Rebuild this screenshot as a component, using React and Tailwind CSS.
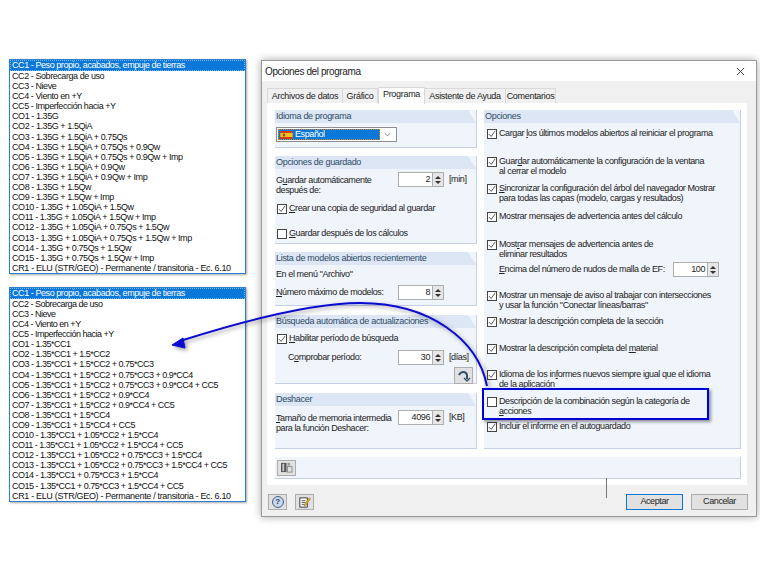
const list1 = [
  "CC2 - Sobrecarga de uso",
  "CC3 - Nieve",
  "CC4 - Viento en +Y",
  "CC5 - Imperfección hacia +Y",
  "CO1 - 1.35G",
  "CO2 - 1.35G + 1.5QiA",
  "CO3 - 1.35G + 1.5QiA + 0.75Qs",
  "CO4 - 1.35G + 1.5QiA + 0.75Qs + 0.9Qw",
  "CO5 - 1.35G + 1.5QiA + 0.75Qs + 0.9Qw + Imp",
  "CO6 - 1.35G + 1.5QiA + 0.9Qw",
  "CO7 - 1.35G + 1.5QiA + 0.9Qw + Imp",
  "CO8 - 1.35G + 1.5Qw",
  "CO9 - 1.35G + 1.5Qw + Imp",
  "CO10 - 1.35G + 1.05QiA + 1.5Qw",
  "CO11 - 1.35G + 1.05QiA + 1.5Qw + Imp",
  "CO12 - 1.35G + 1.05QiA + 0.75Qs + 1.5Qw",
  "CO13 - 1.35G + 1.05QiA + 0.75Qs + 1.5Qw + Imp",
  "CO14 - 1.35G + 0.75Qs + 1.5Qw",
  "CO15 - 1.35G + 0.75Qs + 1.5Qw + Imp",
];

const list2 = [
  "CC2 - Sobrecarga de uso",
  "CC3 - Nieve",
  "CC4 - Viento en +Y",
  "CC5 - Imperfección hacia +Y",
  "CO1 - 1.35*CC1",
  "CO2 - 1.35*CC1 + 1.5*CC2",
  "CO3 - 1.35*CC1 + 1.5*CC2 + 0.75*CC3",
  "CO4 - 1.35*CC1 + 1.5*CC2 + 0.75*CC3 + 0.9*CC4",
  "CO5 - 1.35*CC1 + 1.5*CC2 + 0.75*CC3 + 0.9*CC4 + CC5",
  "CO6 - 1.35*CC1 + 1.5*CC2 + 0.9*CC4",
  "CO7 - 1.35*CC1 + 1.5*CC2 + 0.9*CC4 + CC5",
  "CO8 - 1.35*CC1 + 1.5*CC4",
  "CO9 - 1.35*CC1 + 1.5*CC4 + CC5",
  "CO10 - 1.35*CC1 + 1.05*CC2 + 1.5*CC4",
  "CO11 - 1.35*CC1 + 1.05*CC2 + 1.5*CC4 + CC5",
  "CO12 - 1.35*CC1 + 1.05*CC2 + 0.75*CC3 + 1.5*CC4",
  "CO13 - 1.35*CC1 + 1.05*CC2 + 0.75*CC3 + 1.5*CC4 + CC5",
  "CO14 - 1.35*CC1 + 0.75*CC3 + 1.5*CC4",
  "CO15 - 1.35*CC1 + 0.75*CC3 + 1.5*CC4 + CC5",
];

function ComboList({ items, spacing }) {
  return (
    <div className="w-[237px] border border-[#2f7fd0] bg-white shadow-[1px_1px_2px_rgba(0,0,0,0.35)] text-[9px] leading-[10.1px] text-[#111]">
      <div className="h-[11px] bg-[#0a78d8] pl-[2px] tracking-[-0.43px] text-white whitespace-nowrap outline-1 -outline-offset-1 outline-dotted outline-[#7fb4e6]">CC1 - Peso propio, acabados, empuje de tierras</div>
      {items.map((t) => (
        <div key={t} className={`h-[10.1px] pl-[2px] whitespace-nowrap ${spacing}`}>{t}</div>
      ))}
      <div className="h-[10.1px] pl-[2px] whitespace-nowrap tracking-[-0.33px]">CR1 - ELU (STR/GEO) - Permanente / transitoria - Ec. 6.10</div>
    </div>
  );
}

function Check({ checked }) {
  return (
    <span className="mt-[1px] flex h-[10px] w-[10px] shrink-0 items-center justify-center border border-[#444] bg-white">
      {checked && (
        <svg viewBox="0 0 10 10" className="h-[8px] w-[8px]" fill="none" stroke="#333" strokeWidth="1">
          <path d="M1 5l3 3 5-7" />
        </svg>
      )}
    </span>
  );
}

function Opt({ checked = true, h = "", children }) {
  return (
    <div className={`flex gap-[2px] whitespace-nowrap leading-[10px] ${h}`}>
      <Check checked={checked} />
      <div>{children}</div>
    </div>
  );
}

function Spin({ value }) {
  return (
    <div className="flex h-[15px] w-[46px] shrink-0 border border-[#adadad] bg-white">
      <div className="flex-1 pr-[2px] text-right leading-[13px]">{value}</div>
      <div className="flex w-[11px] flex-col items-center justify-center gap-[2px] border-l border-[#adadad] bg-[#e6e6e6]">
        <span className="h-0 w-0 border-x-[3px] border-b-[3px] border-x-transparent border-b-[#333]" />
        <span className="h-0 w-0 border-x-[3px] border-t-[3px] border-x-transparent border-t-[#333]" />
      </div>
    </div>
  );
}

function Group({ title, h, children, className = "" }) {
  return (
    <div className={`${h} border-b border-r border-[#c5cfe8] bg-[#f0f4fb] ${className}`}>
      <div className="h-[13px] bg-[#dce6f4] pl-[1px] leading-[13px] tracking-[-0.3px] text-[#2d4a66] [clip-path:polygon(0_0,calc(100%-8px)_0,100%_100%,0_100%)]">
        {title}
      </div>
      <div className="px-[1px]">{children}</div>
    </div>
  );
}

function Tab({ active, w, children }) {
  if (active) {
    return <div className={`z-10 -mt-[1px] h-[17px] ${w} border border-b-0 border-[#d9d9d9] bg-white text-center leading-[13px] tracking-[-0.3px]`}>{children}</div>;
  }
  return <div className={`h-[15px] ${w} border border-b-0 border-l-0 border-[#d9d9d9] bg-[#f0f0f0] text-center leading-[15px] tracking-[-0.3px] first:border-l`}>{children}</div>;
}

function FooterBtn({ children }) {
  return <div className="flex h-[16px] w-[19px] items-center justify-center border border-[#adadad] bg-[#e1e1e1]">{children}</div>;
}

export default function App() {
  return (
    <div className="relative flex h-[569px] w-[760px] overflow-hidden bg-white font-['Liberation_Sans',Arial,sans-serif] text-[9px] tracking-[-0.4px] text-[#222]">
      <div className="flex w-[261px] shrink-0 flex-col gap-[13px] pl-[9px] pt-[59px]">
        <ComboList items={list1} spacing="tracking-[-0.43px]" />
        <ComboList items={list2} spacing="tracking-[-0.5px]" />
      </div>

      <div className="mt-[60px] flex h-[457px] w-[496px] flex-col border border-[#9a9a9a] bg-[#f0f0f0] shadow-[0_0_8px_rgba(0,0,0,0.35)]">
        <div className="flex h-[20px] shrink-0 items-center justify-between bg-white pl-[3px] pr-[11px] text-[10px]">
          <span>Opciones del programa</span>
          <svg viewBox="0 0 10 10" className="h-[9px] w-[9px]" fill="none" stroke="#333" strokeWidth="1">
            <path d="M1 1l8 8M9 1l-8 8" />
          </svg>
        </div>

        <div className="ml-[5px] mt-[7px] flex h-[15px] shrink-0">
          <Tab w="w-[76px]">Archivos de datos</Tab>
          <Tab w="w-[35px]">Gráfico</Tab>
          <Tab active w="w-[47px]">Programa</Tab>
          <Tab w="w-[81px]">Asistente de Ayuda</Tab>
          <Tab w="w-[50px]">Comentarios</Tab>
        </div>

        <div className="ml-[5px] flex h-[382px] w-[480px] shrink-0 flex-col bg-white pl-[8px] pr-[6px] pt-[7px]">
          <div className="flex gap-[7px]">
            <div className="flex w-[202px] shrink-0 flex-col gap-[8px]">
              <Group title="Idioma de programa" h="h-[38px]">
                <div className="mt-[4px] flex h-[15px] w-[121px] items-center border border-[#8f8f8f] bg-white p-[1px]">
                  <div className="flex h-full flex-1 items-center gap-[2px] bg-[#0a78d8] pl-[2px] text-white outline-1 -outline-offset-1 outline-dotted outline-[#d9851f]">
                    <svg viewBox="0 0 14 9" className="h-[8px] w-[13px]">
                      <rect width="14" height="9" fill="#d03a1c" />
                      <rect y="2.2" width="14" height="4.6" fill="#f4c21c" />
                      <rect x="3" y="3" width="2.5" height="3" fill="#b0452a" />
                    </svg>
                    Español
                  </div>
                  <svg viewBox="0 0 10 10" className="mx-[4px] h-[7px] w-[7px]" fill="none" stroke="#555" strokeWidth="1">
                    <path d="M1 3l4 4 4-4" />
                  </svg>
                </div>
              </Group>

              <Group title="Opciones de guardado" h="h-[88px]">
                <div className="mt-[3px] flex items-start">
                  <div className="w-[122px] pt-[3px] leading-[10px]">G<u>u</u>ardar automáticamente<br />después de:</div>
                  <Spin value="2" />
                  <span className="ml-[5px] leading-[15px]">[min]</span>
                </div>
                <div className="pl-[1px]">
                  <Opt h="mt-[8px]"><u>C</u>rear una copia de seguridad al guardar</Opt>
                  <Opt checked={false} h="mt-[14px]"><u>G</u>uardar después de los cálculos</Opt>
                </div>
              </Group>

              <Group title="Lista de modelos abiertos recientemente" h="h-[54px]">
                <div className="mt-[4px] leading-[10px]">En el menú "Archivo"</div>
                <div className="mt-[6px] flex items-center whitespace-nowrap">
                  <div className="w-[122px]"><u>N</u>úmero máximo de modelos:</div>
                  <Spin value="8" />
                </div>
              </Group>

              <Group title="Búsqueda automática de actualizaciones" h="mt-[1px] h-[69px]">
                <div className="pl-[1px]">
                  <Opt h="mt-[5px]"><u>H</u>abilitar período de búsqueda</Opt>
                </div>
                <div className="mt-[6px] flex items-center">
                  <div className="w-[122px] pl-[12px]">C<u>o</u>mprobar período:</div>
                  <Spin value="30" />
                  <span className="ml-[5px]">[días]</span>
                </div>
                <div className="mr-[2px] mt-[2px] flex justify-end">
                  <div className="flex h-[17px] w-[19px] items-center justify-center border border-[#adadad] bg-[#e1e1e1]">
                    <svg viewBox="0 0 14 12" className="h-[12px] w-[14px]" fill="none" stroke="#33506b" strokeWidth="2">
                      <path d="M2 5c2-4 7-4 8 0l0 4" />
                      <path d="M7 8l3 3 3-3" strokeWidth="1.3" />
                    </svg>
                  </div>
                </div>
              </Group>

              <Group title="Deshacer" h="mt-[1px] h-[56px]">
                <div className="mt-[4px] flex items-start whitespace-nowrap">
                  <div className="w-[122px] pt-[3px] leading-[10px]"><u>T</u>amaño de memoria intermedia<br />para la función Deshacer:</div>
                  <Spin value="4096" />
                  <span className="ml-[5px] leading-[15px]">[KB]</span>
                </div>
              </Group>
            </div>

            <Group title="Opciones" h="h-[339px]" className="w-[257px]">
              <div className="pl-[2px] pt-[5px]">
                <Opt h="h-[28px]">Cargar <u>l</u>os últimos modelos abiertos al reiniciar el programa</Opt>
                <Opt h="h-[27px]">Guar<u>d</u>ar automáticamente la configuración de la ventana<br />al cerrar el modelo</Opt>
                <Opt h="h-[28px]"><u>S</u>incronizar la configuración del árbol del navegador Mostrar<br />para todas las capas (modelo, cargas y resultados)</Opt>
                <Opt h="h-[28px]">Mostrar mensa<u>j</u>es de advertencia antes del cálculo</Opt>
                <div className="h-[51px]">
                  <Opt>Most<u>r</u>ar mensajes de advertencia antes de<br />eliminar resultados</Opt>
                  <div className="mt-[3px] flex items-center whitespace-nowrap pl-[12px]">
                    <div className="w-[174px]"><u>E</u>ncima del número de nudos de malla de EF:</div>
                    <Spin value="100" />
                  </div>
                </div>
                <Opt h="h-[26px]">Mostrar un mensaje de aviso al trabajar con intersecciones<br />y usar la función "Conectar líneas/barras"</Opt>
                <Opt h="h-[27px]">Mostrar la descri<u>p</u>ción completa de la sección</Opt>
                <Opt h="h-[26px]">Mostrar la descripción completa del <u>m</u>aterial</Opt>
                <Opt h="h-[27px]">Idioma de los in<u>f</u>ormes nuevos siempre igual que el idioma<br />de la aplicación</Opt>
                <Opt checked={false} h="h-[25px]">Descripción de la combinación según la categoría de<br /><u>a</u>cciones</Opt>
                <Opt h="h-[14px]">Incluir el informe en el autoguardado</Opt>
              </div>
            </Group>
          </div>

          <div className="mt-[8px] flex h-[22px] items-center border-b border-r border-[#c5cfe8] bg-[#f0f4fb] pl-[2px]">
            <div className="flex h-[16px] w-[19px] items-center justify-center border border-[#adadad] bg-[#e1e1e1]">
              <svg viewBox="0 0 14 12" className="h-[11px] w-[13px]">
                <rect x="1" y="1" width="6" height="10" fill="#555" />
                <rect x="2.5" y="2" width="2" height="8" fill="#c9c9c9" />
                <rect x="8" y="1" width="3" height="3" fill="#999" />
                <rect x="8" y="5" width="5" height="6" fill="none" stroke="#888" />
              </svg>
            </div>
          </div>
        </div>

        <div className="flex flex-1 items-center justify-between pl-[6px] pr-[8px] pt-[3px]">
          <div className="flex gap-[8px]">
            <FooterBtn>
              <span className="flex h-[12px] w-[12px] items-center justify-center rounded-full border border-[#45608c] bg-[#c9d6ea] text-[8px] font-bold leading-none text-[#23406e]">?</span>
            </FooterBtn>
            <FooterBtn>
              <svg viewBox="0 0 14 14" className="h-[13px] w-[13px]">
                <rect x="2" y="2" width="8" height="10" fill="#fff" stroke="#333" />
                <path d="M4 5h4M4 7h4M4 9h3" stroke="#555" />
                <path d="M7 9l5-7 1.5 1-5 7-2 1z" fill="#e8b820" stroke="#7a5a10" strokeWidth="0.5" />
              </svg>
            </FooterBtn>
          </div>
          <div className="flex gap-[8px]">
            <div className="flex h-[16px] w-[57px] items-center justify-center border-[1.5px] border-[#0a78d8] bg-[#e1e1e1]">Aceptar</div>
            <div className="flex h-[16px] w-[57px] items-center justify-center border border-[#adadad] bg-[#e1e1e1]">Cancelar</div>
          </div>
        </div>
      </div>

      {/* highlight + arrow sit over the dialog */}
      <div className="absolute left-[482px] top-[388px] h-[32px] w-[227px] border-[2px] border-[#0000d8] shadow-[2px_2px_3px_rgba(0,0,0,0.4)]" />
      <div className="absolute left-[606px] top-[478px] h-[20px] w-px bg-[#777]" />
      <svg className="pointer-events-none absolute left-0 top-0 h-[569px] w-[760px] [filter:drop-shadow(2px_2px_2px_rgba(0,0,0,0.4))]" viewBox="0 0 760 569" fill="none">
        <path d="M487 386C478 340 430 303 360 303C310 303 240 322 180 341" stroke="#0a0ad0" strokeWidth="2" />
        <path d="M172 345l11-7 2 10z" fill="#0a0ad0" stroke="#0a0ad0" />
      </svg>
    </div>
  );
}
